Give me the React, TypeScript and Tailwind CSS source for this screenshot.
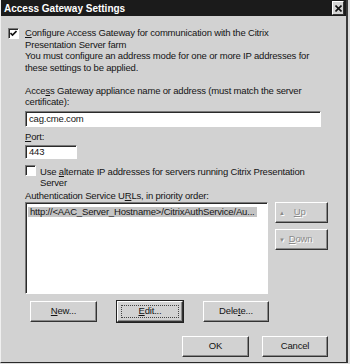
import React from 'react';

const font = { fontFamily: '"Liberation Sans", Arial, sans-serif' };

function Btn({ children, className = '', focus = false }: { children: React.ReactNode; className?: string; focus?: boolean }) {
  return (
    <div
      className={`relative h-[21px] flex items-center bg-[#d2d2d2] border border-t-white border-l-white border-b-[#333] border-r-[#333] shadow-[inset_-1px_-1px_0_#8a8a8a] ${focus ? 'outline outline-1 outline-[#222]' : ''} ${className}`}
    >
      {focus && <div className="absolute inset-[3px] border border-dotted border-[#444]" />}
      <span>{children}</span>
    </div>
  );
}

function Check({ checked }: { checked?: boolean }) {
  return (
    <div className="w-[11px] h-[11px] shrink-0 bg-white border border-t-[#7a7a7a] border-l-[#7a7a7a] border-b-white border-r-white shadow-[inset_1px_1px_0_#2a2a2a] flex items-center justify-center">
      {checked && (
        <svg width="7" height="7" viewBox="0 0 7 7">
          <path d="M0.5 3 L2.5 5 L6.5 1" stroke="#111" strokeWidth="1.6" fill="none" />
        </svg>
      )}
    </div>
  );
}

export default function App() {
  return (
    <div className="w-[350px] h-[364px] bg-[#dcdcdc] text-[9.5px] tracking-[-0.18px] text-[#141414] overflow-hidden" style={font}>
      <div className="w-[348px] h-[363px] bg-[#d2d2d2] border-l border-l-[#f0f0f0] border-r-2 border-r-[#3a3a3a] border-b border-b-[#2a2a2a] flex flex-col">
        {/* title bar */}
        <div className="h-[16px] bg-[#1b1b1b] flex items-center justify-between pl-[3px] pr-[2px] shrink-0">
          <span className="text-white font-bold text-[10px] tracking-normal">Access Gateway Settings</span>
          <div className="w-[12px] h-[14px] bg-[#d4d4d4] border border-t-white border-l-white border-b-[#333] border-r-[#333] flex items-center justify-center">
            <svg width="7" height="7" viewBox="0 0 7 7">
              <path d="M0.5 0.5 L6.5 6.5 M6.5 0.5 L0.5 6.5" stroke="#111" strokeWidth="1.6" />
            </svg>
          </div>
        </div>

        <div className="flex flex-col">
          <div className="flex mt-[11px] pl-[7px]">
            <div className="mt-[1px]"><Check checked /></div>
            <div className="ml-[6px] leading-[12px]">
              <div><u>C</u>onfigure Access Gateway for communication with the Citrix</div>
              <div>Presentation Server farm</div>
              <div className="mt-[-1px]">You must configure an address mode for one or more IP addresses for</div>
              <div>these settings to be applied.</div>
            </div>
          </div>

          <div className="pl-[24px] mt-[11px] leading-[11px]">
            <div>Acce<u>s</u>s Gateway appliance name or address (must match the server</div>
            <div>certificate):</div>
          </div>

          <div className="ml-[24px] mt-[4px] w-[296px] h-[16px] bg-white border border-t-[#7a7a7a] border-l-[#7a7a7a] border-b-white border-r-white shadow-[inset_1px_1px_0_#2a2a2a] flex items-center pl-[3px]">
            cag.cme.com
          </div>

          <div className="pl-[24px] mt-[4px] leading-[11px]">
            <u>P</u>ort:
          </div>

          <div className="ml-[24px] mt-[3px] w-[52px] h-[14px] bg-white border border-t-[#7a7a7a] border-l-[#7a7a7a] border-b-white border-r-white shadow-[inset_1px_1px_0_#2a2a2a] flex items-center pl-[3px]">
            443
          </div>

          <div className="flex pl-[24px] mt-[7px]">
            <div className="mt-[-1px]"><Check /></div>
            <div className="ml-[4px] leading-[11px]">
              <div>Use <u>a</u>lternate IP addresses for servers running Citrix Presentation</div>
              <div>Server</div>
            </div>
          </div>

          <div className="pl-[24px] mt-[2px] leading-[11px]">
            Authentication Service U<u>R</u>Ls, in priority order:
          </div>

          <div className="flex mt-[1px] pl-[24px]">
            <div className="w-[243px] h-[92px] bg-white border border-t-[#7a7a7a] border-l-[#7a7a7a] border-b-white border-r-white shadow-[inset_1px_1px_0_#2a2a2a] pt-[2px] pl-[2px]">
              <div className="inline-block h-[10px] bg-[#c4c4c4] leading-[10px] pl-[2px] pr-[2px] whitespace-nowrap">
                http://&lt;AAC_Server_Hostname&gt;/CitrixAuthService/Au...
              </div>
            </div>
            <div className="ml-[7px] flex flex-col gap-[6px]">
              <Btn className="w-[53px] pl-[3px] text-[#8a8a8a] [text-shadow:1px_1px_0_#fff]">
                <span className="text-[6px] mr-[9px]">▲</span><u>U</u>p
              </Btn>
              <Btn className="w-[53px] pl-[3px] text-[#8a8a8a] [text-shadow:1px_1px_0_#fff]">
                <span className="text-[6px] mr-[4px]">▼</span><u>D</u>own
              </Btn>
            </div>
          </div>

          <div className="flex mt-[7px] pl-[29px] gap-[20px]">
            <Btn className="w-[67px] justify-center"><u>N</u>ew...</Btn>
            <Btn className="w-[66px] justify-center" focus><u>E</u>dit...</Btn>
            <Btn className="w-[66px] justify-center">Dele<u>t</u>e...</Btn>
          </div>

          <div className="flex mt-[14px] pl-[181px] gap-[13px]">
            <Btn className="w-[67px] justify-center">OK</Btn>
            <Btn className="w-[66px] justify-center">Cancel</Btn>
          </div>
        </div>
      </div>
    </div>
  );
}
